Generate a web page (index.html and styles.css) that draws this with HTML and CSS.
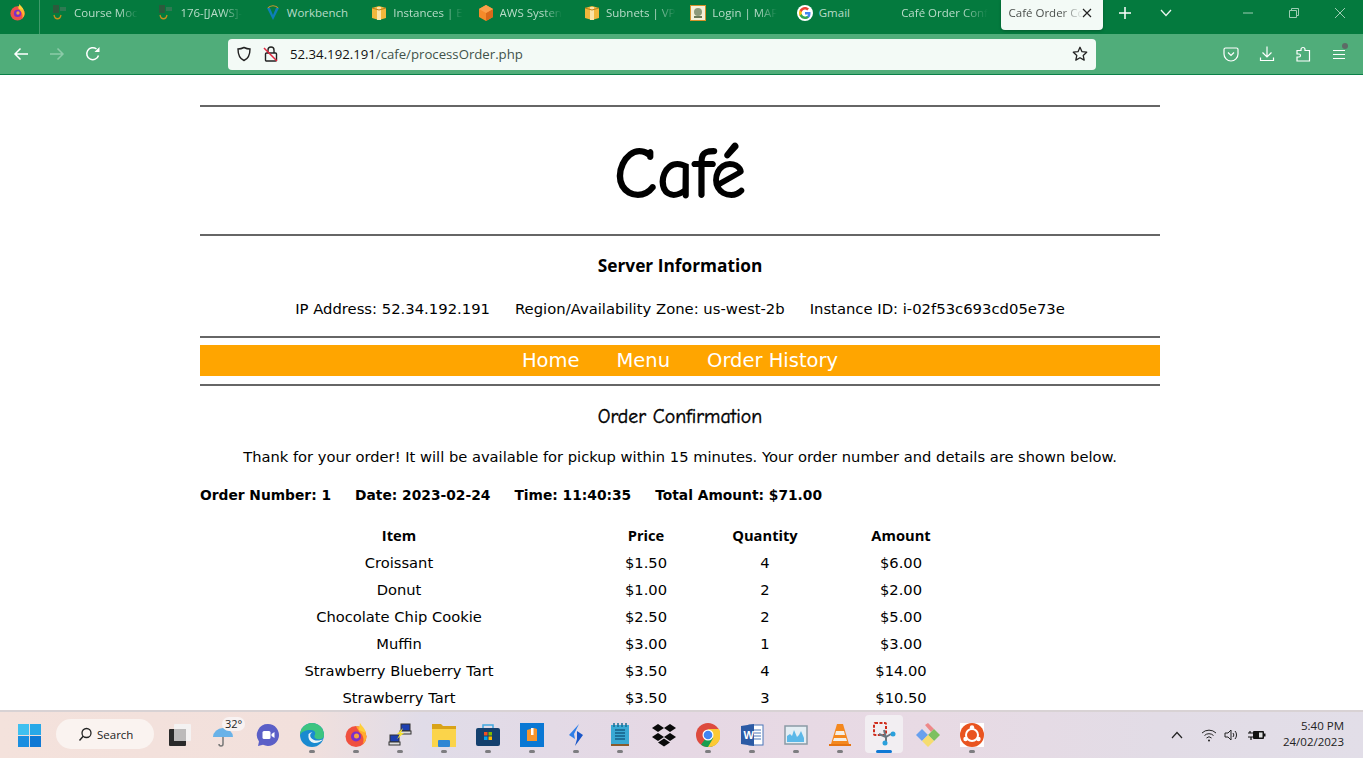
FILE: index.html
```html
<!DOCTYPE html>
<html lang="en">
<head>
<meta charset="utf-8">
<title>Café Order Confirmation</title>
<link rel="stylesheet" href="styles.css">
</head>
<body>
<div class="tabbar">
  <div class="ff-slot">
    <svg width="17" height="18" viewBox="0 0 18 18"><circle cx="9" cy="10.500" r="7.500" fill="#f0504a"/><path d="M9 3a7.500 7.500 0 0 1 7.500 7.500c0 2-1 4-2.500 5 1-3 0-6-2-7.500C11 6 10 4.500 9 3z" fill="#ffb52e"/><path d="M11 .5c1 2 3.500 3 4.500 6.500L10 5.500z" fill="#ffcf3a"/><circle cx="9" cy="10.500" r="3.800" fill="#7b2fc9"/><circle cx="9.500" cy="10" r="1.800" fill="#f7a33c"/></svg>
  </div>
  <div class="tab">
    <svg class="fav" width="16" height="16" viewBox="0 0 16 16"><rect x="1" y="0" width="6" height="8" fill="#2c5a3c"/><rect x="8" y="2" width="6" height="4" fill="#2e7a52"/><path d="M2 10c1 5 6 5 7 0" fill="none" stroke="#c8901c" stroke-width="1.300"/></svg>
    <span class="tab-text tab-fade">Course Moc</span>
  </div>
  <div class="tab">
    <svg class="fav" width="16" height="16" viewBox="0 0 16 16"><rect x="1" y="0" width="6" height="8" fill="#2c5a3c"/><rect x="8" y="2" width="6" height="4" fill="#2e7a52"/><path d="M2 10c1 5 6 5 7 0" fill="none" stroke="#c8901c" stroke-width="1.300"/></svg>
    <span class="tab-text tab-fade">176-[JAWS]-</span>
  </div>
  <div class="tab">
    <svg class="fav" width="16" height="16" viewBox="0 0 16 16"><path d="M2 3l6 12 6-12-3 0-3 7-3-7z" fill="#0e7fb8"/><path d="M3 3c2-3 8-3 10 0" fill="none" stroke="#c9962e" stroke-width="1.200"/></svg>
    <span class="tab-text">Workbench</span>
  </div>
  <div class="tab">
    <svg class="fav" width="16" height="16" viewBox="0 0 16 16"><path d="M1 3l7-2 7 2v10l-7 2-7-2z" fill="#f0b73c"/><path d="M6 2h4v13H6z" fill="#fbe3a6"/><path d="M1 3l7 2 7-2" fill="none" stroke="#b87d17"/></svg>
    <span class="tab-text tab-fade">Instances | E</span>
  </div>
  <div class="tab">
    <svg class="fav" width="16" height="16" viewBox="0 0 16 16"><path d="M8 0l7 4v8l-7 4-7-4V4z" fill="#f58a2a"/><path d="M8 8l7-4v8l-7 4z" fill="#d9691a"/><path d="M8 0l7 4-7 4-7-4z" fill="#fba04a"/></svg>
    <span class="tab-text tab-fade">AWS Systen</span>
  </div>
  <div class="tab">
    <svg class="fav" width="16" height="16" viewBox="0 0 16 16"><path d="M1 3l7-2 7 2v10l-7 2-7-2z" fill="#f0b73c"/><path d="M6 2h4v13H6z" fill="#fbe3a6"/><path d="M1 3l7 2 7-2" fill="none" stroke="#b87d17"/></svg>
    <span class="tab-text tab-fade">Subnets | VP</span>
  </div>
  <div class="tab">
    <svg class="fav" width="16" height="16" viewBox="0 0 16 16"><rect x="0.500" y="0.500" width="15" height="15" fill="#f5f0d8" stroke="#d6902a"/><circle cx="8" cy="7" r="4" fill="#8d9a7a"/><rect x="4" y="11" width="8" height="2" fill="#6b7a58"/></svg>
    <span class="tab-text tab-fade">Login | MAF</span>
  </div>
  <div class="tab">
    <svg class="fav" width="16" height="16" viewBox="0 0 16 16"><circle cx="8" cy="8" r="8" fill="#fff"/><path d="M13.500 8.200c0-.5 0-.9-.1-1.300H8v2.500h3.100c-.1.800-.6 1.500-1.300 1.900v1.500h2.100c1-1 1.600-2.600 1.600-4.600z" fill="#4285f4"/><path d="M8 14c1.600 0 2.900-.5 3.900-1.500l-2.100-1.600c-.5.400-1.200.6-1.800.6-1.500 0-2.800-1-3.200-2.400H2.600v1.600C3.600 12.700 5.700 14 8 14z" fill="#34a853"/><path d="M4.800 9.100C4.600 8.400 4.600 7.600 4.800 6.900V5.300H2.600c-.8 1.700-.8 3.700 0 5.400z" fill="#fbbc05"/><path d="M8 4.500c.8 0 1.600.3 2.200.9l1.800-1.800C10.900 2.600 9.500 2 8 2 5.700 2 3.600 3.300 2.600 5.300l2.200 1.600C5.200 5.500 6.500 4.500 8 4.500z" fill="#ea4335"/></svg>
    <span class="tab-text">Gmail</span>
  </div>
  <div class="tab tab-plain">
    <span class="tab-text tab-fade">Café Order Conf</span>
  </div>
  <div class="tab-active">
    <span class="tab-text tab-fade tab-text-active">Café Order Cc</span>
    <svg class="tab-close" width="10" height="10" viewBox="0 0 10 10"><path d="M1 1l8 8M9 1l-8 8" stroke="#222" stroke-width="1.200"/></svg>
  </div>
  <div class="tab-tools">
    <svg width="14" height="14" viewBox="0 0 14 14"><path d="M7 1v12M1 7h12" stroke="#fff" stroke-width="1.500"/></svg>
    <svg width="12" height="8" viewBox="0 0 12 8"><path d="M1 1l5 5.500L11 1" fill="none" stroke="#eaf6ef" stroke-width="1.300"/></svg>
  </div>
  <div class="win-controls">
    <svg width="10" height="10" viewBox="0 0 10 10"><path d="M0 5h10" stroke="#9dcdb3"/></svg>
    <svg width="10" height="10" viewBox="0 0 10 10"><path d="M0.500 2.500h7v7h-7zM2.500 2.500v-2h7v7h-2" fill="none" stroke="#9dcdb3"/></svg>
    <svg width="10" height="10" viewBox="0 0 10 10"><path d="M0 0l10 10M10 0L0 10" stroke="#9dcdb3"/></svg>
  </div>
</div>

<div class="toolbar">
  <div class="nav-buttons">
    <svg width="16" height="14" viewBox="0 0 16 14"><path d="M15 7H2M7.500 1.500L2 7l5.500 5.500" fill="none" stroke="#fff" stroke-width="1.500"/></svg>
    <svg width="16" height="14" viewBox="0 0 16 14"><path d="M1 7h13M8.500 1.500L14 7l-5.500 5.500" fill="none" stroke="#8ccba9" stroke-width="1.500"/></svg>
    <svg width="16" height="16" viewBox="0 0 16 16"><path d="M13.500 9.500A6 6 0 1 1 11.500 3" fill="none" stroke="#fff" stroke-width="1.500"/><path d="M14.500 1v5h-5z" fill="#fff"/></svg>
  </div>
  <div class="urlbar">
    <svg class="url-shield" width="16" height="16" viewBox="0 0 16 16"><path d="M8 1.500c2 1 4 1.500 6 1.500 0 5-1 9.500-6 11.500C3 12.500 2 8 2 3c2 0 4-.5 6-1.500z" fill="none" stroke="#222" stroke-width="1.400"/></svg>
    <svg class="url-lock" width="16" height="18" viewBox="0 0 16 18"><rect x="2.500" y="8" width="11" height="8" rx="1" fill="none" stroke="#222" stroke-width="1.400"/><path d="M5 8V5a3 3 0 0 1 6 0v3" fill="none" stroke="#222" stroke-width="1.400"/><path d="M1 3l13 13" stroke="#e0273f" stroke-width="1.500"/></svg>
    <span class="url-text"><span class="url-host">52.34.192.191</span>/cafe/processOrder.php</span>
    <svg class="url-star" width="16" height="16" viewBox="0 0 16 16"><path d="M8 1.300l2 4.400 4.700.5-3.500 3.200 1 4.700L8 11.700l-4.200 2.400 1-4.700L1.300 6.200 6 5.700z" fill="none" stroke="#222" stroke-width="1.300" stroke-linejoin="round"/></svg>
  </div>
  <div class="tool-icons">
    <svg width="16" height="16" viewBox="0 0 16 16"><path d="M2.500 2h11A1.500 1.500 0 0 1 15 3.500V8A7 7 0 0 1 1 8V3.500A1.500 1.500 0 0 1 2.500 2z" fill="none" stroke="#fff" stroke-width="1.200"/><path d="M5 6.500l3 3 3-3" fill="none" stroke="#fff" stroke-width="1.200"/></svg>
    <svg width="16" height="16" viewBox="0 0 16 16"><path d="M8 .5v10.500M3.500 6.500L8 11l4.500-4.500M1.500 11.500v3h13v-3" fill="none" stroke="#fff" stroke-width="1.200"/></svg>
    <svg width="16" height="16" viewBox="0 0 16 16"><path d="M2 15v-4h2a1.500 1.500 0 0 0 0-3H2V4.500h4V3.500a2 2 0 0 1 4 0v1h4.500V15z" fill="none" stroke="#fff" stroke-width="1.200"/></svg>
    <span class="menu-icon">
      <svg width="16" height="14" viewBox="0 0 16 14"><path d="M2 3.500h12M2 7.500h12M2 11.500h12" stroke="#fff" stroke-width="1.200"/></svg>
      <span class="menu-dot"></span>
    </span>
  </div>
</div>

<main class="page">
  <div class="wrap">
    <hr class="rule">
    <h1 class="brand">Café</h1>
    <hr class="rule">
    <h2 class="server-title">Server Information</h2>
    <p class="server-info"><span>IP Address: 52.34.192.191</span><span>Region/Availability Zone: us-west-2b</span><span>Instance ID: i-02f53c693cd05e73e</span></p>
    <hr class="rule">
    <nav class="nav"><a>Home</a><a>Menu</a><a>Order History</a></nav>
    <hr class="rule">
    <h2 class="order-title">Order Confirmation</h2>
    <p class="thanks">Thank for your order! It will be available for pickup within 15 minutes. Your order number and details are shown below.</p>
    <p class="order-meta"><span>Order Number: 1</span><span>Date: 2023-02-24</span><span>Time: 11:40:35</span><span>Total Amount: $71.00</span></p>
    <table class="items">
      <colgroup><col class="c-item"><col class="c-price"><col class="c-qty"><col class="c-amt"></colgroup>
      <thead><tr><th>Item</th><th>Price</th><th>Quantity</th><th>Amount</th></tr></thead>
      <tbody>
        <tr><td>Croissant</td><td>$1.50</td><td>4</td><td>$6.00</td></tr>
        <tr><td>Donut</td><td>$1.00</td><td>2</td><td>$2.00</td></tr>
        <tr><td>Chocolate Chip Cookie</td><td>$2.50</td><td>2</td><td>$5.00</td></tr>
        <tr><td>Muffin</td><td>$3.00</td><td>1</td><td>$3.00</td></tr>
        <tr><td>Strawberry Blueberry Tart</td><td>$3.50</td><td>4</td><td>$14.00</td></tr>
        <tr><td>Strawberry Tart</td><td>$3.50</td><td>3</td><td>$10.50</td></tr>
      </tbody>
    </table>
  </div>
</main>

<footer class="taskbar">
  <svg class="start" width="23" height="23" viewBox="0 0 24 24"><rect width="11.500" height="11.500" fill="#3fc0f0"/><rect x="12.500" width="11.500" height="11.500" fill="#28a8e8"/><rect y="12.500" width="11.500" height="11.500" fill="#1a8ee0"/><rect x="12.500" y="12.500" width="11.500" height="11.500" fill="#0f78d4"/></svg>
  <div class="search">
    <svg width="15" height="15" viewBox="0 0 15 15"><circle cx="8.500" cy="6" r="4.500" fill="none" stroke="#222" stroke-width="1.300"/><path d="M5.200 9.300L1.500 13.500" stroke="#222" stroke-width="1.400"/></svg>
    <span>Search</span>
  </div>
  <div class="apps">
    <div class="app"><svg width="24" height="24" viewBox="0 0 24 24"><rect x="6" y="1" width="17" height="17" rx="1" fill="#f4f2f2"/><rect x="1" y="6" width="17" height="17" rx="1" fill="#2a2a2a"/><rect x="6" y="6" width="12" height="12" fill="#bcbaba"/></svg></div>
    <div class="app app-weather"><svg width="24" height="24" viewBox="0 0 24 24"><path d="M1 14a10 9 0 0 1 20 0z" fill="#69b2e8"/><path d="M11 14v7a2 2 0 0 1-4 0" fill="none" stroke="#777" stroke-width="1.500"/></svg><span class="temp">32°</span></div>
    <div class="app"><svg width="24" height="24" viewBox="0 0 24 24"><path d="M12 1a11 11 0 1 1-5 20.800L2 23l1-4.500A11 11 0 0 1 12 1z" fill="#5b5fc7"/><rect x="6.500" y="8" width="8" height="8" rx="1.500" fill="#fff"/><path d="M15.500 11l3-2v6l-3-2z" fill="#fff"/></svg></div>
    <div class="app app-on"><svg width="24" height="24" viewBox="0 0 24 24"><circle cx="12" cy="12" r="12" fill="#1a8ad0"/><path d="M0 12A12 12 0 0 1 24 12c0 4-4 5-7 4-2-.5-3-2-2.500-3.500C16 11 15.500 7 11 7 5.500 7 1 9 0 12z" fill="#3cc480"/><path d="M14 20c-4-1-6-4-5.500-8-.5-1 2-3 4-2.500C9.500 10 9 15 14 17c3 1 7 .5 9.500-1A12 12 0 0 1 14 20z" fill="#eaf4f8"/></svg></div>
    <div class="app app-on"><svg width="24" height="24" viewBox="0 0 24 24"><circle cx="12" cy="13.500" r="10.500" fill="#f0503f"/><path d="M12 3a10.500 10.500 0 0 1 10.500 10.500c0 3-1.500 6-4 8 2-4 1-9-2-11.500C14.500 8 13 5 12 3z" fill="#ffac2e"/><path d="M16 0c1.500 3 5 5 6 10L15 7z" fill="#ffcf3a"/><circle cx="12" cy="13.500" r="5" fill="#7b2fc9"/><circle cx="12.500" cy="13" r="2.500" fill="#f7a33c"/></svg></div>
    <div class="app app-on"><svg width="24" height="24" viewBox="0 0 24 24"><rect x="13" y="1" width="9" height="7" fill="#1d3fb0" stroke="#333"/><rect x="12" y="8" width="11" height="3" fill="#ddd" stroke="#333"/><rect x="2" y="12" width="9" height="7" fill="#1d3fb0" stroke="#333"/><rect x="1" y="19" width="11" height="3" fill="#ddd" stroke="#333"/><path d="M15 5l-6 6h3l-3 5 7-6h-3z" fill="#f5e12e"/></svg></div>
    <div class="app app-on"><svg width="24" height="24" viewBox="0 0 24 24"><path d="M0 1h9l2 2h13v20H0z" fill="#d9a318"/><rect y="6" width="24" height="18" fill="#fbd44a"/><rect x="6" y="17" width="12" height="7" rx="1" fill="#2f86d4"/></svg></div>
    <div class="app app-on"><svg width="24" height="24" viewBox="0 0 24 24"><path d="M7 5V2h10v3" fill="none" stroke="#40a8e0" stroke-width="1.500"/><rect y="5" width="24" height="18" rx="2" fill="#14406e"/><rect x="8" y="9" width="3.500" height="3.500" fill="#f25022"/><rect x="12.500" y="9" width="3.500" height="3.500" fill="#7fba00"/><rect x="8" y="13.500" width="3.500" height="3.500" fill="#00a4ef"/><rect x="12.500" y="13.500" width="3.500" height="3.500" fill="#ffb900"/></svg></div>
    <div class="app app-on"><svg width="24" height="24" viewBox="0 0 24 24"><rect width="24" height="24" fill="#0a78d4"/><path d="M7 7l7-2 3 1v12H7z" fill="#f7952c"/><rect x="11" y="5" width="2.500" height="7" fill="#fff"/></svg></div>
    <div class="app app-on"><svg width="24" height="24" viewBox="0 0 24 24"><path d="M15 1L5 12l6 4-1-5z" fill="#2e7fe8"/><path d="M13 8l6 4-8 11 2-7z" fill="#1a57c8"/></svg></div>
    <div class="app app-on"><svg width="24" height="24" viewBox="0 0 24 24"><rect x="3" y="2" width="18" height="19" fill="#39a9d4"/><rect x="3" y="21" width="18" height="2" fill="#8a5a2c"/><path d="M7 7h10M7 10h10M7 13h10M7 16h10" stroke="#165f86" stroke-width="1.500"/><path d="M6 0v4M10 0v4M14 0v4M18 0v4" stroke="#1a6c92" stroke-width="1.500"/></svg></div>
    <div class="app"><svg width="24" height="24" viewBox="0 0 24 24"><path d="M6 1l6 4-6 4-6-4zM18 1l6 4-6 4-6-4zM6 10l6 4-6 4-6-4zM18 10l6 4-6 4-6-4zM12 15.500l6 4-6 4-6-4z" fill="#0a0a0a"/></svg></div>
    <div class="app app-on"><svg width="24" height="24" viewBox="0 0 24 24"><circle cx="12" cy="12" r="12" fill="#dd4b3e"/><path d="M12 12L22.400 18A12 12 0 0 1 5 21.800z" fill="#1a9e50"/><path d="M12 6h10.900A12 12 0 0 1 12 24L17.200 15z" fill="#fcc934"/><circle cx="12" cy="12" r="5.500" fill="#fff"/><circle cx="12" cy="12" r="4.300" fill="#4285f4"/></svg></div>
    <div class="app app-on"><svg width="24" height="24" viewBox="0 0 24 24"><rect x="9" y="2" width="14" height="20" fill="#fff" stroke="#4a76b8"/><path d="M13 7h8M13 10h8M13 13h8M13 16h8" stroke="#4a76b8"/><path d="M1 3l13-2v22L1 21z" fill="#2b5aa5"/><text class="w-letter" x="3.500" y="15.500">W</text></svg></div>
    <div class="app app-on"><svg width="24" height="24" viewBox="0 0 24 24"><rect x="1" y="3" width="22" height="18" fill="#e4eef4" stroke="#8b9aa5" stroke-width="1.500"/><path d="M3 19v-6l3-2 2 2 2-6 3 7 2-2 2-4 3 7v4z" fill="#5cb8e8"/></svg></div>
    <div class="app app-on"><svg width="24" height="24" viewBox="0 0 24 24"><path d="M9 1h6l6 20H3z" fill="#f4881f"/><path d="M8 8h8l1 4H7z" fill="#f5efe6"/><path d="M6 15h12l1 3H5z" fill="#f5efe6"/><path d="M1 21h22v2H1z" fill="#e67310"/></svg></div>
    <div class="app app-active"><svg width="24" height="24" viewBox="0 0 24 24"><rect x="2" y="1" width="12" height="12" rx="1" fill="none" stroke="#cf2c1c" stroke-width="2" stroke-dasharray="3 1.500"/><path d="M7 12l7 3 0 5M12 8l2 8M14 15l5-3" stroke="#6b7680" stroke-width="2" fill="none"/><circle cx="21" cy="12" r="2.500" fill="#2aa0dc"/><circle cx="13" cy="21" r="2.500" fill="#2aa0dc"/></svg></div>
    <div class="app"><svg width="24" height="24" viewBox="0 0 24 24"><path d="M9 2l3-2 6 6-3 3z" fill="#ee8888"/><path d="M0 12l6-6 6 6-6 6z" fill="#68a0ee"/><path d="M12 12l6-6 6 6-6 6z" fill="#7cc060"/><path d="M6 18l6-6 6 6-6 6z" fill="#f5dc70"/></svg></div>
    <div class="app app-on"><svg width="24" height="24" viewBox="0 0 24 24"><rect width="24" height="24" fill="#fff"/><circle cx="12" cy="12" r="12" fill="#e95420"/><circle cx="12" cy="12" r="6" fill="none" stroke="#fff" stroke-width="2"/><circle cx="12" cy="4.500" r="2.200" fill="#fff"/><circle cx="5.500" cy="16" r="2.200" fill="#fff"/><circle cx="18.500" cy="16" r="2.200" fill="#fff"/></svg></div>
  </div>
  <div class="tray">
    <svg class="tray-chev" width="12" height="8" viewBox="0 0 12 8"><path d="M1 7l5-5.500L11 7" fill="none" stroke="#222" stroke-width="1.200"/></svg>
    <svg class="tray-wifi" width="16" height="14" viewBox="0 0 16 14"><path d="M1 5a10 10 0 0 1 14 0M3.500 7.500a6.500 6.500 0 0 1 9 0M5.500 10a3.500 3.500 0 0 1 5 0" fill="none" stroke="#222"/><circle cx="8" cy="12.500" r="1" fill="#222"/></svg>
    <svg class="tray-vol" width="16" height="14" viewBox="0 0 16 14"><path d="M1 5h3l3-3v10l-3-3H1z" fill="none" stroke="#222"/><path d="M9 5a3 3 0 0 1 0 4M11 3a6 6 0 0 1 0 8" fill="none" stroke="#222"/></svg>
    <svg class="tray-bat" width="18" height="12" viewBox="0 0 18 12"><rect x="5" y="2" width="11" height="8" rx="1" fill="#111"/><rect x="16" y="4.500" width="1.500" height="3" fill="#111"/><path d="M0 4h5M0 8h5M2 2v2M3 8v3" stroke="#111" stroke-width="1.200"/><rect x="11" y="3.500" width="3.500" height="5" fill="#ddd"/></svg>
    <div class="clock"><span>5:40 PM</span><span>24/02/2023</span></div>
  </div>
</footer>
</body>
</html>
```
FILE: styles.css
```css
* { box-sizing: border-box; }
html, body { margin: 0; height: 100%; }
body {
  width: 1363px;
  height: 758px;
  overflow: hidden;
  display: flex;
  flex-direction: column;
  font-family: "DejaVu Sans", sans-serif;
  color: #000;
  background: #fff;
}

/* tab strip */
.tabbar {
  height: 34px;
  flex: none;
  display: flex;
  align-items: flex-start;
  background: #047a3e;
}
.ff-slot {
  width: 40px;
  height: 34px;
  margin-right: 2px;
  padding: 3px 0 0 9px;
  border-right: 1px solid #3e9a6a;
}
.tab {
  width: 106.400px;
  height: 26px;
  display: flex;
  align-items: center;
  gap: 6px;
  padding-left: 10px;
  flex: none;
}
.tab-plain { width: 107.400px; padding-left: 8px; }
.fav { flex: none; }
.tab-text {
  font: 11.500px/26px "Open Sans", sans-serif;
  color: #b9dcc9;
  white-space: nowrap;
}
.tab-fade {
  -webkit-mask-image: linear-gradient(to right, #000 70%, transparent 100%);
  mask-image: linear-gradient(to right, #000 70%, transparent 100%);
}
.tab-active {
  width: 102px;
  height: 30px;
  flex: none;
  position: relative;
  padding-left: 8px;
  background: #f3faf6;
  border-radius: 0 0 4px 4px;
  box-shadow: 0 1px 3px rgba(0,0,0,.25);
}
.tab-text-active { color: #4a4f4c; }
.tab-close { position: absolute; right: 11px; top: 8px; }
.tab-tools {
  display: flex;
  align-items: center;
  gap: 28px;
  height: 25px;
  padding-left: 15px;
}
.win-controls {
  margin-left: auto;
  display: flex;
  align-items: center;
  gap: 36px;
  height: 25px;
  padding-right: 18px;
}

/* toolbar */
.toolbar {
  height: 41px;
  flex: none;
  display: flex;
  align-items: center;
  background: #50ad7a;
  border-bottom: 1px solid #0a8048;
}
.nav-buttons {
  width: 228px;
  display: flex;
  align-items: center;
  gap: 20px;
  padding-left: 13px;
}
.urlbar {
  width: 868px;
  height: 31px;
  display: flex;
  align-items: center;
  background: #f3faf6;
  border-radius: 4px;
  padding: 0 8px;
  font: 13.200px "Open Sans", sans-serif;
  color: #41524a;
}
.url-shield { margin-right: 11px; }
.url-lock { margin-right: 11px; }
.url-host { color: #111; }
.url-star { margin-left: auto; }
.tool-icons {
  display: flex;
  align-items: center;
  gap: 20px;
  padding-left: 127px;
}
.menu-icon { position: relative; display: block; height: 14px; }
.menu-icon svg { display: block; }
.menu-dot {
  position: absolute;
  right: -1px;
  top: -4px;
  width: 6px;
  height: 6px;
  border-radius: 50%;
  background: #5d6b66;
}

/* page */
.page {
  flex: 1;
  min-height: 0;
  overflow: hidden;
  padding: 30px 0 0 200px;
}
.wrap { width: 960px; text-align: center; }
.rule {
  margin: 0;
  border: 0;
  border-top: 2px solid #666;
}
.brand {
  margin: 0;
  height: 127px;
  font: 400 70px/135px "Comic Sans MS", "Comic Neue", cursive;
  -webkit-text-stroke: 1.800px #000;
  color: #000;
}
.server-title {
  margin: 0;
  padding-top: 19px;
  font: 700 17.300px/22px "Open Sans", sans-serif;
}
.server-info {
  margin: 0;
  padding: 20px 0 15px;
  font: 14.800px/24px "DejaVu Sans", sans-serif;
  display: flex;
  justify-content: center;
  gap: 25px;
}
.nav {
  margin: 7px 0 8px;
  height: 31px;
  background: #ffa500;
  display: flex;
  justify-content: center;
  gap: 37px;
  font: 19.500px/31px "DejaVu Sans", sans-serif;
  color: #fff;
}
.order-title {
  margin: 0;
  padding-top: 20px;
  font: 400 19.800px/22px "Comic Sans MS", "Comic Neue", cursive;
  -webkit-text-stroke: 0.400px #000;
}
.thanks {
  margin: 0;
  padding-top: 17px;
  font: 14.700px/24px "DejaVu Sans", sans-serif;
}
.order-meta {
  margin: 0;
  padding-top: 14px;
  display: flex;
  gap: 24px;
  font: 700 13.800px/24px "DejaVu Sans", sans-serif;
}
.items {
  margin-top: 15px;
  border-collapse: collapse;
  table-layout: fixed;
  width: 766px;
  font: 14.700px/27px "DejaVu Sans", sans-serif;
}
.c-item { width: 398px; }
.c-price { width: 96px; }
.c-qty { width: 142px; }
.c-amt { width: 130px; }
.items th, .items td { padding: 0; text-align: center; height: 27px; }
.items th { font: 700 14.700px/27px "Open Sans", sans-serif; }

/* taskbar */
.taskbar {
  height: 48px;
  flex: none;
  display: flex;
  align-items: center;
  padding-left: 18px;
  border-top: 2px solid #d8d2d4;
  background: linear-gradient(90deg, #f4e2dc 0%, #f2e0dc 22%, #e0dce8 31%, #e6d8e4 50%, #e8dae4 68%, #e2dce6 85%, #e2dee8 100%);
}
.start { flex: none; margin-right: 15px; }
.search {
  width: 98px;
  height: 30px;
  flex: none;
  display: flex;
  align-items: center;
  gap: 4px;
  padding-left: 22px;
  margin-top: -2px;
  border-radius: 15px;
  background: #faf3f0;
  font: 11.500px "Open Sans", sans-serif;
  color: #222;
}
.apps { display: flex; margin-left: 4px; flex: none; }
.app {
  width: 44px;
  height: 44px;
  flex: none;
  display: flex;
  align-items: center;
  justify-content: center;
  position: relative;
}
.app-on::after {
  content: "";
  position: absolute;
  left: 19px;
  bottom: 4px;
  width: 6px;
  height: 3px;
  border-radius: 2px;
  background: #7d7d80;
}
.app-active {
  width: 38px;
  height: 38px;
  margin: 2px 3px 4px;
  background: #f2eef2;
  border-radius: 4px;
}
.app-active::after {
  content: "";
  position: absolute;
  left: 11px;
  bottom: 0;
  width: 16px;
  height: 3px;
  border-radius: 2px;
  background: #0f78d4;
}
.temp {
  position: absolute;
  left: 20px;
  top: 4px;
  padding: 0 3px;
  border-radius: 8px;
  background: #f8f2f2;
  font: 11px/14px "Open Sans", sans-serif;
  color: #222;
}
.w-letter { font: 700 11px "Liberation Sans", sans-serif; fill: #fff; }
.tray {
  flex: 1;
  display: flex;
  align-items: center;
  padding-right: 19px;
}
.tray-chev { margin-left: 177px; }
.tray-wifi { margin-left: 18px; }
.tray-vol { margin-left: 7px; }
.tray-bat { margin-left: 8px; }
.clock {
  margin-left: auto;
  margin-top: -3px;
  display: flex;
  flex-direction: column;
  align-items: flex-end;
  font: 11.500px/16px "Open Sans", sans-serif;
  color: #222;
}
```
